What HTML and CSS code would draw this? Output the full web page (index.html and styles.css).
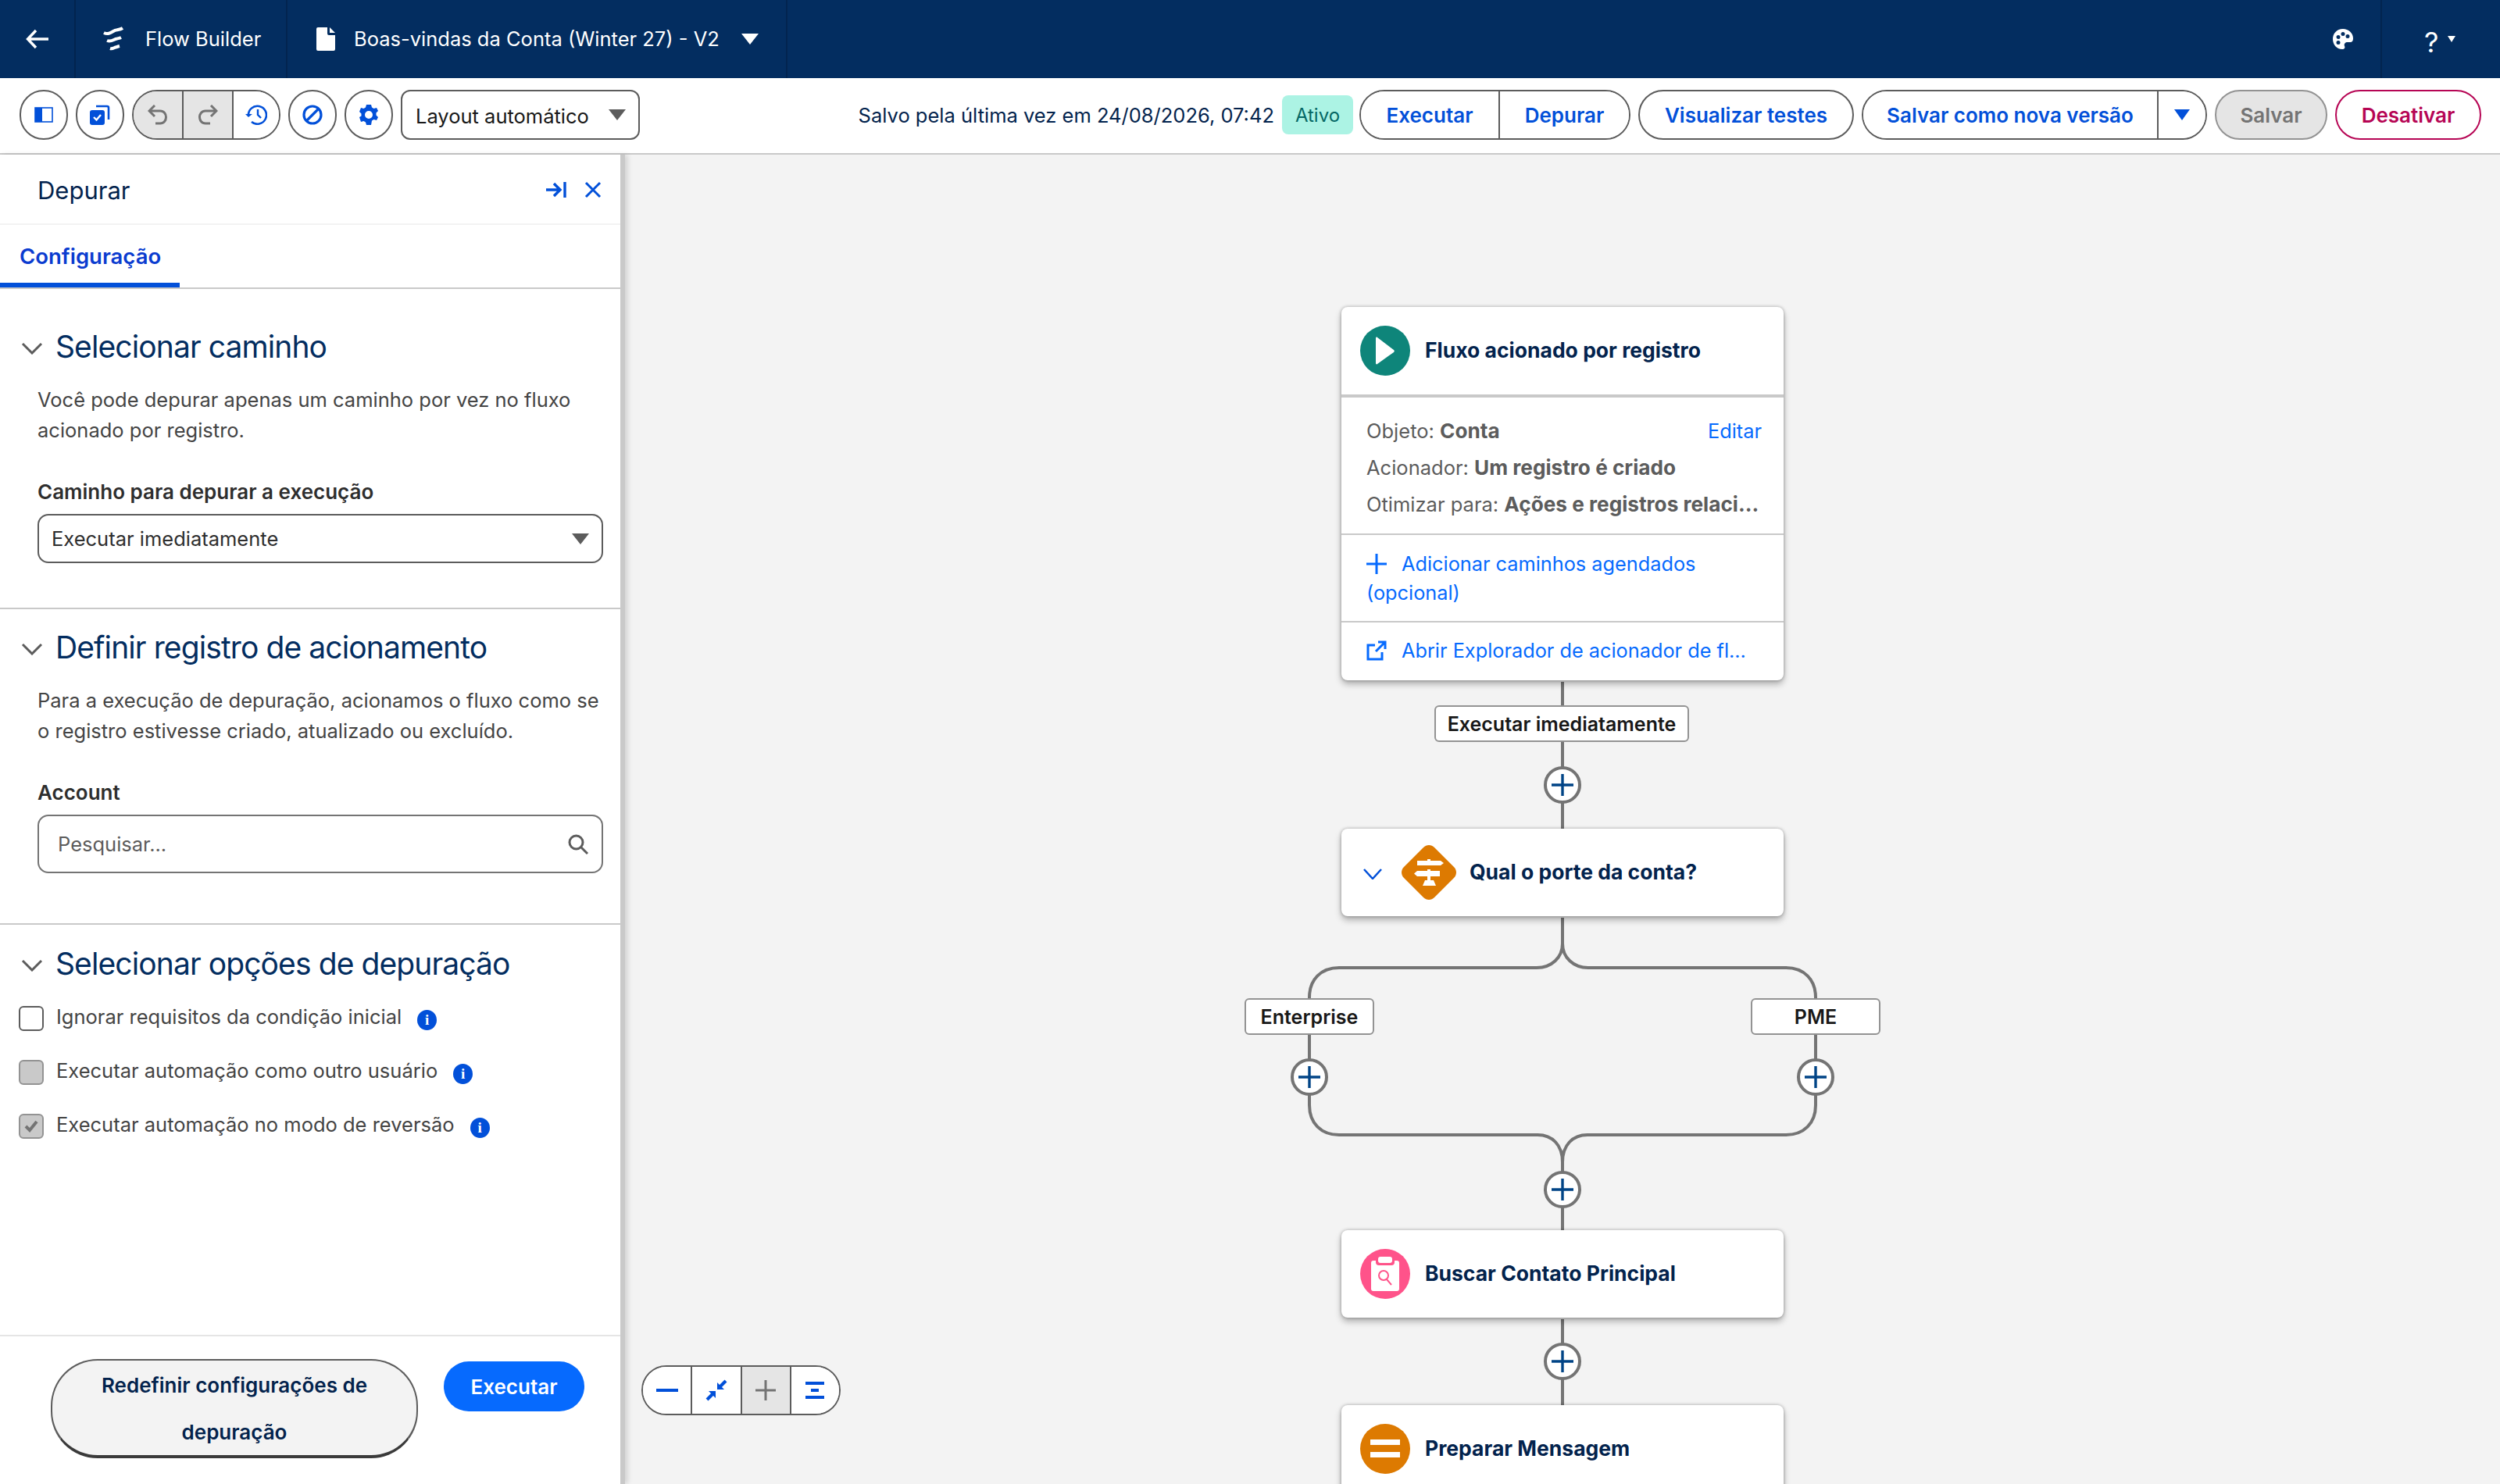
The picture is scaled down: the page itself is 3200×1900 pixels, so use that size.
FILE: index.html
```html
<!DOCTYPE html>
<html lang="pt-BR">
<head>
    <meta charset="UTF-8">
    <title>Flow Builder</title>
    <link rel="stylesheet" href="styles.css">
</head>
<body>

<header class="topbar">
    <div class="top-cell back-cell">
        <svg width="32" height="32" viewBox="0 0 32 32" fill="none" stroke="#fff" stroke-width="3.400"><path d="M30 16H4M14 5 3.500 16 14 27"/></svg>
    </div>
    <div class="top-cell app-cell">
        <svg width="32" height="32" viewBox="0 0 32 32" fill="none" stroke="#fff" stroke-width="4"><path d="M3 8c6 3 10-1 14-3 4-1 7-1 10-3"/><path d="M7 18c5 2 8-1 11-2 3-1 5-1 7-2"/><path d="M11 28c3 1 5-1 7-1.500 2-.5 3-1 5-1.500"/></svg>
        <span>Flow Builder</span>
    </div>
    <div class="top-cell file-cell">
        <svg width="26" height="32" viewBox="0 0 26 32" fill="#fff"><path d="M3 1h12v8a2 2 0 0 0 2 2h8v18a2 2 0 0 1-2 2H3a2 2 0 0 1-2-2V3a2 2 0 0 1 2-2zM18 1l7 7h-7z"/></svg>
        <span class="file-name">Boas-vindas da Conta (Winter 27) - V2</span>
        <i class="tri tri-white"></i>
    </div>
    <div class="top-space"></div>
    <div class="palette-cell">
        <svg width="28" height="28" viewBox="0 0 28 28"><path fill="#fff" fill-rule="evenodd" d="M14 1C6 1 1 7 1 14s5 13 12 13c3 0 4-2 3-4-1-3 1-5 4-5h3c3 0 4-2 4-5C27 6 21 1 14 1zM8 9a2.500 2.500 0 1 1 0 5 2.500 2.500 0 0 1 0-5zm6-4a2.500 2.500 0 1 1 0 5 2.500 2.500 0 0 1 0-5zm6 3a2.500 2.500 0 1 1 0 5 2.500 2.500 0 0 1 0-5zM8 16a2.500 2.500 0 1 1 0 5 2.500 2.500 0 0 1 0-5z"/></svg>
    </div>
    <div class="help-cell">
        <span class="help-mark">?</span>
        <i class="tri tri-small"></i>
    </div>
</header>

<div class="toolbar">
    <button class="btn-icon">
        <svg width="24" height="20" viewBox="0 0 24 20" fill="none"><rect x="1" y="1" width="22" height="18" stroke="#0250d9" stroke-width="1.600"/><rect x="1" y="1" width="9" height="18" fill="#0250d9"/></svg>
    </button>
    <button class="btn-icon">
        <svg width="26" height="26" viewBox="0 0 26 26" fill="none"><path d="M8 2h14a2 2 0 0 1 2 2v15" stroke="#0250d9" stroke-width="2.600"/><rect x="0" y="7" width="19" height="19" rx="3" fill="#0250d9"/><path d="m5 16 3.500 3.500L14 13" stroke="#fff" stroke-width="2.400"/></svg>
    </button>
    <div class="btn-group">
        <button class="seg seg-icon seg-off">
            <svg width="26" height="26" viewBox="0 0 26 26" fill="none" stroke="#747474" stroke-width="3"><path d="M9 1 2 8l7 7"/><path d="M3 8h13c10 0 10 16 0 16h-6"/></svg>
        </button>
        <button class="seg seg-icon seg-off">
            <svg width="26" height="26" viewBox="0 0 26 26" fill="none" stroke="#747474" stroke-width="3"><path d="m17 1 7 7-7 7"/><path d="M23 8H10C0 8 0 24 10 24h6"/></svg>
        </button>
        <button class="seg seg-icon">
            <svg width="28" height="26" viewBox="0 0 28 26" fill="none" stroke="#0250d9" stroke-width="2.600"><path d="M4 14A11.500 11.500 0 1 1 8 22"/><path d="M16 6v7l4 4" stroke-width="2.400"/><path d="m0 12 4 4 5-4z" fill="#0250d9" stroke="none"/></svg>
        </button>
    </div>
    <button class="btn-icon">
        <svg width="26" height="26" viewBox="0 0 26 26" fill="none" stroke="#0250d9" stroke-width="3.200"><circle cx="13" cy="13" r="11"/><path d="M5.500 20.500 20.500 5.500"/></svg>
    </button>
    <button class="btn-icon">
        <svg width="24" height="26" viewBox="0 0 24 26"><path fill="#0250d9" fill-rule="evenodd" d="M9 0h6l1 3.500 2.500 1.500 3.500-1 2 4-2.500 2.500v3L24 16l-2 4-3.500-1-2.500 1.500L15 26H9l-1-3.500L5.500 21 2 22l-2-6 2.500-1.500v-3L0 9l2-5 3.500 1L8 3.500zm3 8a5 5 0 1 0 0 10 5 5 0 0 0 0-10z"/></svg>
    </button>
    <div class="layout-select">
        <span>Layout automático</span>
        <i class="tri tri-gray"></i>
    </div>

    <div class="toolbar-right">
        <span class="saved-text">Salvo pela última vez em 24/08/2026, 07:42</span>
        <span class="badge-active">Ativo</span>
        <div class="btn-group">
            <button class="seg seg-run">Executar</button>
            <button class="seg seg-debug">Depurar</button>
        </div>
        <button class="btn-text btn-tests">Visualizar testes</button>
        <div class="btn-group">
            <button class="seg seg-save-new">Salvar como nova versão</button>
            <button class="seg seg-caret"><i class="tri tri-blue"></i></button>
        </div>
        <button class="btn-text btn-save" disabled>Salvar</button>
        <button class="btn-text btn-deactivate">Desativar</button>
    </div>
</div>

<div class="workspace">
    <aside class="panel">
        <div class="panel-head">
            <span class="panel-title">Depurar</span>
            <svg class="panel-icon" width="28" height="24" viewBox="0 0 28 24" fill="none" stroke="#0250d9" stroke-width="3.400"><path d="M1 12h17M11 4l8 8-8 8"/><path d="M25 2v20"/></svg>
            <svg width="22" height="22" viewBox="0 0 22 22" fill="none" stroke="#0250d9" stroke-width="3"><path d="m2 2 18 18M20 2 2 20"/></svg>
        </div>
        <div class="tabs">
            <div class="tab-active">Configuração</div>
        </div>

        <section class="sec sec-path">
            <h2 class="sec-head">
                <svg class="chev" width="28" height="16" viewBox="0 0 28 16" fill="none" stroke="#5c5c5c" stroke-width="3"><path d="m2 2 12 12L26 2"/></svg>
                Selecionar caminho
            </h2>
            <p class="sec-text">Você pode depurar apenas um caminho por vez no fluxo<br>acionado por registro.</p>
            <label class="field-label">Caminho para depurar a execução</label>
            <div class="select-box">
                <span>Executar imediatamente</span>
                <i class="tri tri-gray"></i>
            </div>
        </section>

        <section class="sec sec-record">
            <h2 class="sec-head">
                <svg class="chev" width="28" height="16" viewBox="0 0 28 16" fill="none" stroke="#5c5c5c" stroke-width="3"><path d="m2 2 12 12L26 2"/></svg>
                Definir registro de acionamento
            </h2>
            <p class="sec-text">Para a execução de depuração, acionamos o fluxo como se<br>o registro estivesse criado, atualizado ou excluído.</p>
            <label class="field-label">Account</label>
            <div class="search-box">
                <span>Pesquisar...</span>
                <svg width="28" height="28" viewBox="0 0 28 28" fill="none" stroke="#5c5c5c" stroke-width="3"><circle cx="11.500" cy="11.500" r="8.500"/><path d="m18 18 8 8"/></svg>
            </div>
        </section>

        <section class="sec sec-options">
            <h2 class="sec-head">
                <svg class="chev" width="28" height="16" viewBox="0 0 28 16" fill="none" stroke="#5c5c5c" stroke-width="3"><path d="m2 2 12 12L26 2"/></svg>
                Selecionar opções de depuração
            </h2>
            <div class="check-row">
                <span class="check"></span>
                <span class="check-text">Ignorar requisitos da condição inicial</span>
                <span class="info">i</span>
            </div>
            <div class="check-row">
                <span class="check check-off"></span>
                <span class="check-text">Executar automação como outro usuário</span>
                <span class="info">i</span>
            </div>
            <div class="check-row">
                <span class="check check-off">
                    <svg width="20" height="18" viewBox="0 0 20 18" fill="none" stroke="#747474" stroke-width="4"><path d="m3 9 5 5 9-11"/></svg>
                </span>
                <span class="check-text">Executar automação no modo de reversão</span>
                <span class="info">i</span>
            </div>
        </section>

        <div class="panel-foot">
            <button class="btn-reset">Redefinir configurações de depuração</button>
            <button class="btn-run">Executar</button>
        </div>
    </aside>

    <main class="canvas">
        <div class="zoom-bar">
            <button class="zoom-cell">
                <svg width="28" height="6" viewBox="0 0 28 6"><rect width="28" height="4" y="1" fill="#0250d9"/></svg>
            </button>
            <button class="zoom-cell">
                <svg width="28" height="28" viewBox="0 0 28 28" fill="#0250d9" stroke="#0250d9"><path d="M26 2 18 10" stroke-width="4"/><path d="M15 13V4l9 9z" stroke="none"/><path d="M2 26l8-8" stroke-width="4"/><path d="M13 15v9l-9-9z" stroke="none"/></svg>
            </button>
            <button class="zoom-cell zoom-off">
                <svg width="26" height="26" viewBox="0 0 26 26" stroke="#747474" stroke-width="3"><path d="M13 0v26M0 13h26"/></svg>
            </button>
            <button class="zoom-cell">
                <svg width="26" height="26" viewBox="0 0 26 26" fill="#0250d9"><rect width="24" height="4" y="2" x="1"/><rect width="10" height="4" y="11" x="8"/><rect width="24" height="4" y="20" x="1"/></svg>
            </button>
        </div>

        <!-- conectores, em coordenadas da janela -->
        <svg class="links" width="2400" height="1702" viewBox="800 198 2400 1702" fill="none" stroke="#747474" stroke-width="4">
            <path d="M2000 873V1061"/>
            <path d="M2000 1175V1208C2000 1226 1986 1239 1967 1239H1714C1691 1239 1676 1254 1676 1277V1415C1676 1438 1691 1453 1714 1453H1968C1987 1453 2000 1466 2000 1488V1575"/>
            <path d="M2000 1175V1208C2000 1226 2014 1239 2033 1239H2286C2309 1239 2324 1254 2324 1277V1415C2324 1438 2309 1453 2286 1453H2032C2013 1453 2000 1466 2000 1488"/>
            <path d="M2000 1689V1799"/>
        </svg>

        <article class="node node-start">
            <div class="start-head">
                <span class="node-icon icon-teal">
                    <svg width="26" height="36" viewBox="0 0 26 36" fill="#fff"><path d="M1 2c0-1 1-2 2-1l21 16c1 1 1 2 0 3L3 35c-1 1-2 0-2-1z"/></svg>
                </span>
                <span class="node-title">Fluxo acionado por registro</span>
            </div>
            <div class="start-info">
                <div class="info-row"><span>Objeto: <b>Conta</b></span><a class="node-link">Editar</a></div>
                <div class="info-row"><span>Acionador:&nbsp;<b>Um registro é criado</b></span></div>
                <div class="info-row"><span>Otimizar para: <b>Ações e registros relaci...</b></span></div>
            </div>
            <div class="start-action start-paths">
                <a class="node-link">
                    <svg class="action-icon" width="26" height="26" viewBox="0 0 26 26" stroke="#066afe" stroke-width="3"><path d="M13 0v26M0 13h26"/></svg>Adicionar caminhos agendados<br>(opcional)
                </a>
            </div>
            <div class="start-action start-open">
                <a class="node-link">
                    <svg class="action-icon" width="26" height="26" viewBox="0 0 26 26" fill="none" stroke="#066afe" stroke-width="3"><path d="M11 6H2v18h18v-9M12 14 24 2M15 2h9v9"/></svg>Abrir Explorador de acionador de fl...
                </a>
            </div>
        </article>

        <span class="path-label label-run">Executar imediatamente</span>
        <span class="add-btn add-1"><svg width="30" height="30" viewBox="0 0 30 30" stroke="#014486" stroke-width="3.400"><path d="M15 1v28M1 15h28"/></svg></span>

        <article class="node node-plain node-decision">
            <svg class="decision-chev" width="24" height="14" viewBox="0 0 24 14" fill="none" stroke="#0250d9" stroke-width="2.500"><path d="m1 1 11 12L23 1"/></svg>
            <span class="diamond">
                <svg width="70" height="70" viewBox="0 0 70 70"><path fill="#dd7a01" d="M28 3c4-4 10-4 14 0l25 25c4 4 4 10 0 14L42 67c-4 4-10 4-14 0L3 42c-4-4-4-10 0-14z"/><path fill="#fff" d="M20 20h13v-2h4v2h13l4 3-4 3H20zM49 33v7H37v5h4l3 7H27l3-7h3v-5H20l-4-3.500 4-3.500h13v-2h4v2z"/></svg>
            </span>
            <span class="node-title">Qual o porte da conta?</span>
        </article>

        <span class="path-label label-enterprise">Enterprise</span>
        <span class="path-label label-pme">PME</span>
        <span class="add-btn add-2"><svg width="30" height="30" viewBox="0 0 30 30" stroke="#014486" stroke-width="3.400"><path d="M15 1v28M1 15h28"/></svg></span>
        <span class="add-btn add-3"><svg width="30" height="30" viewBox="0 0 30 30" stroke="#014486" stroke-width="3.400"><path d="M15 1v28M1 15h28"/></svg></span>
        <span class="add-btn add-4"><svg width="30" height="30" viewBox="0 0 30 30" stroke="#014486" stroke-width="3.400"><path d="M15 1v28M1 15h28"/></svg></span>

        <article class="node node-plain node-lookup">
            <span class="node-icon icon-pink">
                <svg width="36" height="44" viewBox="0 0 36 44"><path fill="#fff" d="M3 5h3v2a4 4 0 0 0 4 4h16a4 4 0 0 0 4-4V5h3a3 3 0 0 1 3 3v33a3 3 0 0 1-3 3H3a3 3 0 0 1-3-3V8a3 3 0 0 1 3-3z"/><rect x="9" width="18" height="8" rx="3" fill="#fff"/><circle cx="16" cy="24" r="6" fill="none" stroke="#ff538a" stroke-width="2"/><path d="m20 29 6 7" stroke="#ff538a" stroke-width="2"/></svg>
            </span>
            <span class="node-title">Buscar Contato Principal</span>
        </article>

        <span class="add-btn add-5"><svg width="30" height="30" viewBox="0 0 30 30" stroke="#014486" stroke-width="3.400"><path d="M15 1v28M1 15h28"/></svg></span>

        <article class="node node-plain node-assign">
            <span class="node-icon icon-orange">
                <svg width="38" height="24" viewBox="0 0 38 24" fill="#fff"><rect width="38" height="7"/><rect y="16" width="38" height="7"/></svg>
            </span>
            <span class="node-title">Preparar Mensagem</span>
        </article>
    </main>
</div>

</body>
</html>
```

FILE: styles.css
```css
* {
    box-sizing: border-box;
}

body {
    margin: 0;
    width: 3200px;
    height: 1900px;
    overflow: hidden;
    display: flex;
    flex-direction: column;
    font-family: Inter, "Noto Sans", sans-serif;
    font-size: 25.5px;
    color: #03234d;
    background: #fff;
}

button {
    font-family: inherit;
    padding: 0;
    margin: 0;
    cursor: pointer;
}

h2, p {
    margin: 0;
    font-weight: 400;
}

.tri {
    display: inline-block;
    width: 0;
    height: 0;
    border-style: solid;
    border-color: transparent;
    border-bottom-width: 0;
}

.tri-white {
    border-width: 14px 11px 0;
    border-top-color: #fff;
}

.tri-small {
    border-width: 8px 5px 0;
    border-top-color: #fff;
}

.tri-gray {
    border-width: 14px 11px 0;
    border-top-color: #5c5c5c;
}

.tri-blue {
    border-width: 14px 10px 0;
    border-top-color: #0250d9;
}

/* barra superior */
.topbar {
    height: 100px;
    flex: none;
    display: flex;
    align-items: center;
    background: #032d60;
    color: #fff;
}

.top-cell {
    height: 100%;
    display: flex;
    align-items: center;
    border-right: 2px solid #02244f;
}

.back-cell {
    width: 97px;
    padding-left: 32px;
}

.app-cell {
    width: 271px;
    padding-left: 33px;
    gap: 24px;
}

.app-cell span {
    margin-top: -2px;
}

.file-cell {
    width: 640px;
    padding-left: 36px;
}

.file-name {
    margin-left: 23px;
    margin-right: 28px;
    margin-top: -2px;
}

.top-space {
    flex: 1;
}

.palette-cell {
    width: 62px;
    display: flex;
    align-items: center;
}

.help-cell {
    width: 153px;
    height: 100%;
    padding-left: 54px;
    display: flex;
    align-items: center;
    gap: 12px;
    border-left: 2px solid #02244f;
}

.help-mark {
    font-size: 36px;
    margin-top: 8px;
}

/* barra de ferramentas */
.toolbar {
    height: 98px;
    flex: none;
    display: flex;
    align-items: center;
    gap: 10px;
    padding: 0 24px 2px 25px;
    background: #fff;
    border-bottom: 2px solid #c9c9c9;
}

.btn-icon {
    width: 62px;
    height: 64px;
    display: flex;
    align-items: center;
    justify-content: center;
    background: #fff;
    border: 2px solid #5c5c5c;
    border-radius: 32px;
}

.btn-group {
    height: 64px;
    display: flex;
    border: 2px solid #5c5c5c;
    border-radius: 32px;
    overflow: hidden;
    background: #fff;
}

.seg {
    height: 100%;
    border: 0;
    background: #fff;
    color: #0250d9;
    font-size: 26px;
    font-weight: 600;
    display: flex;
    align-items: center;
    justify-content: center;
}

.seg + .seg {
    border-left: 2px solid #5c5c5c;
}

.seg-icon {
    width: 62px;
}

.seg-icon + .seg-icon {
    width: 64px;
}

.seg-icon:last-child {
    width: 60px;
}

.seg-off {
    background: #e5e5e5;
}

.seg-run {
    width: 176px;
}

.seg-debug {
    width: 167px;
}

.seg-save-new {
    width: 376px;
}

.seg-caret {
    width: 62px;
}

.layout-select {
    width: 306px;
    height: 64px;
    padding: 0 16px 0 17px;
    display: flex;
    align-items: center;
    justify-content: space-between;
    border: 2px solid #5c5c5c;
    border-radius: 12px;
    color: #181818;
}

.layout-select span {
    margin-top: 2px;
}

.toolbar-right {
    margin-left: auto;
    display: flex;
    align-items: center;
    gap: 10px;
}

.saved-text {
    white-space: nowrap;
}

.badge-active {
    width: 91px;
    height: 50px;
    margin-right: -2px;
    display: flex;
    align-items: center;
    justify-content: center;
    background: #acf3e4;
    color: #056764;
    border-radius: 8px;
    font-size: 24px;
}

.btn-text {
    height: 64px;
    border: 2px solid #5c5c5c;
    border-radius: 32px;
    background: #fff;
    font-size: 26px;
    font-weight: 600;
    color: #0250d9;
}

.btn-tests {
    width: 276px;
}

.btn-save {
    width: 144px;
    background: #e5e5e5;
    color: #747474;
    border-color: #939393;
}

.btn-deactivate {
    width: 187px;
    color: #b60554;
    border-color: #b60554;
}

/* area de trabalho */
.workspace {
    flex: 1;
    display: flex;
    min-height: 0;
}

.panel {
    width: 800px;
    flex: none;
    display: flex;
    flex-direction: column;
    background: #fff;
    border-right: 6px solid #c9c9c9;
    box-shadow: 4px 0 6px rgba(0, 0, 0, 0.12);
    position: relative;
    z-index: 2;
}

.panel-head {
    height: 90px;
    flex: none;
    display: flex;
    align-items: center;
    padding: 2px 24px 0 48px;
    border-bottom: 2px solid #f3f3f3;
}

.panel-title {
    flex: 1;
    font-size: 31px;
}

.panel-icon {
    margin-right: 22px;
}

.tabs {
    height: 82px;
    flex: none;
    border-bottom: 2px solid #c9c9c9;
}

.tab-active {
    width: 230px;
    height: 80px;
    padding: 24px 0 0 25px;
    font-size: 27.5px;
    font-weight: 600;
    color: #0b3cd0;
    border-bottom: 6px solid #0250d9;
    line-height: 32px;
}

.sec {
    flex: none;
    border-bottom: 2px solid #c9c9c9;
    padding: 0 22px 0 48px;
}

.sec-path {
    height: 410px;
    padding-top: 48px;
}

.sec-record {
    height: 404px;
    padding-top: 23px;
}

.sec-options {
    flex: 1;
    padding: 24px 0 0 24px;
    border-bottom: 2px solid #e5e5e5;
}

.sec-head {
    display: flex;
    align-items: center;
    gap: 16px;
    margin-left: -21px;
    height: 50px;
    font-size: 39px;
    letter-spacing: -0.9px;
    white-space: nowrap;
    color: #032d60;
}

.sec-options .sec-head {
    margin-left: 3px;
    margin-bottom: 30px;
}

.chev {
    flex: none;
    margin-top: 6px;
}

.sec-text {
    margin-top: 24px;
    line-height: 39px;
    color: #444;
    white-space: nowrap;
}

.field-label {
    display: block;
    margin-top: 44px;
    font-size: 26px;
    font-weight: 600;
    color: #2e2e2e;
    line-height: 32px;
}

.select-box {
    height: 63px;
    margin-top: 12px;
    padding: 0 16px;
    display: flex;
    align-items: center;
    justify-content: space-between;
    border: 2px solid #5c5c5c;
    border-radius: 14px;
    color: #2e2e2e;
}

.search-box {
    height: 75px;
    margin-top: 12px;
    padding: 0 16px 0 24px;
    display: flex;
    align-items: center;
    justify-content: space-between;
    border: 2px solid #747474;
    border-radius: 14px;
    color: #5c5c5c;
}

.check-row {
    height: 32px;
    margin-bottom: 37px;
    display: flex;
    align-items: center;
    color: #444;
    white-space: nowrap;
}

.check-text {
    margin-bottom: 6px;
}

.check {
    width: 32px;
    height: 32px;
    margin-right: 16px;
    display: flex;
    align-items: center;
    justify-content: center;
    border: 2px solid #5c5c5c;
    border-radius: 6px;
    background: #fff;
}

.check-off {
    background: #c9c9c9;
    border-color: #939393;
}

.info {
    width: 25px;
    height: 26px;
    margin-left: 20px;
    margin-top: 4px;
    border-radius: 50%;
    background: #0250d9;
    color: #fff;
    font-size: 19px;
    font-weight: 800;
    font-family: "Liberation Serif", serif;
    display: flex;
    align-items: center;
    justify-content: center;
}

.panel-foot {
    height: 189px;
    flex: none;
    display: flex;
    align-items: flex-start;
    padding: 29px 0 0 65px;
    gap: 33px;
}

.btn-reset {
    width: 470px;
    height: 127px;
    border: 2px solid #5c5c5c;
    border-bottom: 4px solid #3a3a3a;
    border-radius: 60px;
    background: #f3f3f3;
    color: #03234d;
    font-size: 26px;
    font-weight: 600;
    line-height: 60px;
    padding: 2px 40px 0;
}

.btn-run {
    width: 180px;
    height: 64px;
    margin-top: 3px;
    border: 0;
    border-radius: 32px;
    background: #066afe;
    color: #fff;
    font-size: 26px;
    font-weight: 600;
}

/* canvas do fluxo */
.canvas {
    flex: 1;
    position: relative;
    overflow: hidden;
    background: #f3f3f3;
}

.links {
    position: absolute;
    left: 0;
    top: 0;
}

.zoom-bar {
    position: absolute;
    left: 21px;
    top: 1550px;
    width: 255px;
    height: 64px;
    display: flex;
    border: 2px solid #5c5c5c;
    border-radius: 32px;
    overflow: hidden;
    background: #fff;
    z-index: 1;
}

.zoom-cell {
    flex: 1;
    display: flex;
    align-items: center;
    justify-content: center;
    border: 0;
    background: #fff;
}

.zoom-cell + .zoom-cell {
    border-left: 2px solid #5c5c5c;
}

.zoom-off {
    background: #e5e5e5;
}

.node {
    position: absolute;
    left: 917px;
    width: 566px;
    background: #fff;
    border-radius: 8px;
    box-shadow: 0 5px 9px rgba(0, 0, 0, 0.28), 0 0 4px rgba(0, 0, 0, 0.28);
    font-size: 25.5px;
}

.node-start {
    top: 195px;
    height: 478px;
}

.node-plain {
    height: 112px;
    display: flex;
    align-items: center;
    padding-left: 24px;
}

.node-decision {
    top: 863px;
}

.node-lookup {
    top: 1377px;
}

.node-assign {
    top: 1601px;
}

.node-title {
    font-size: 26.5px;
    font-weight: 700;
    color: #03234d;
    white-space: nowrap;
    margin-top: -3px;
}

.node-icon {
    width: 64px;
    height: 64px;
    flex: none;
    margin-right: 19px;
    border-radius: 50%;
    display: flex;
    align-items: center;
    justify-content: center;
}

.icon-teal {
    background: #0e857a;
}

.icon-pink {
    background: #ff538a;
}

.icon-orange {
    background: #dd7a01;
}

.decision-chev {
    margin: 4px 25px 0 4px;
}

.diamond {
    width: 70px;
    height: 70px;
    flex: none;
    margin-right: 17px;
}

.start-head {
    height: 116px;
    display: flex;
    align-items: center;
    padding-left: 24px;
    border-bottom: 4px solid #c9c9c9;
}

.start-info {
    height: 176px;
    padding: 19px 28px 0 32px;
    border-bottom: 2px solid #c9c9c9;
    color: #5c5c5c;
}

.info-row {
    height: 47px;
    display: flex;
    align-items: center;
    justify-content: space-between;
    white-space: nowrap;
}

.info-row b {
    font-size: 26.2px;
    font-weight: 700;
}

.node-link {
    color: #066afe;
    font-size: 25.3px;
}

.start-action {
    padding: 0 20px 0 32px;
    display: flex;
    align-items: center;
    white-space: nowrap;
}

.start-paths {
    height: 112px;
    line-height: 37.5px;
    border-bottom: 2px solid #c9c9c9;
}

.start-open {
    height: 70px;
}

.action-icon {
    margin-right: 19px;
    vertical-align: -4px;
}

.path-label {
    position: absolute;
    height: 47px;
    display: flex;
    align-items: center;
    justify-content: center;
    border: 2px solid #939393;
    border-radius: 6px;
    background: #fff;
    color: #181818;
    font-weight: 600;
    font-size: 25px;
}

.label-run {
    left: 1036px;
    top: 705px;
    width: 326px;
}

.label-enterprise {
    left: 793px;
    top: 1080px;
    width: 166px;
}

.label-pme {
    left: 1441px;
    top: 1080px;
    width: 166px;
}

.add-btn {
    position: absolute;
    width: 48px;
    height: 48px;
    display: flex;
    align-items: center;
    justify-content: center;
    border: 4px solid #747474;
    border-radius: 50%;
    background: #fff;
}

.add-1 {
    left: 1176px;
    top: 783px;
}

.add-2 {
    left: 852px;
    top: 1157px;
}

.add-3 {
    left: 1500px;
    top: 1157px;
}

.add-4 {
    left: 1176px;
    top: 1301px;
}

.add-5 {
    left: 1176px;
    top: 1521px;
}
```
